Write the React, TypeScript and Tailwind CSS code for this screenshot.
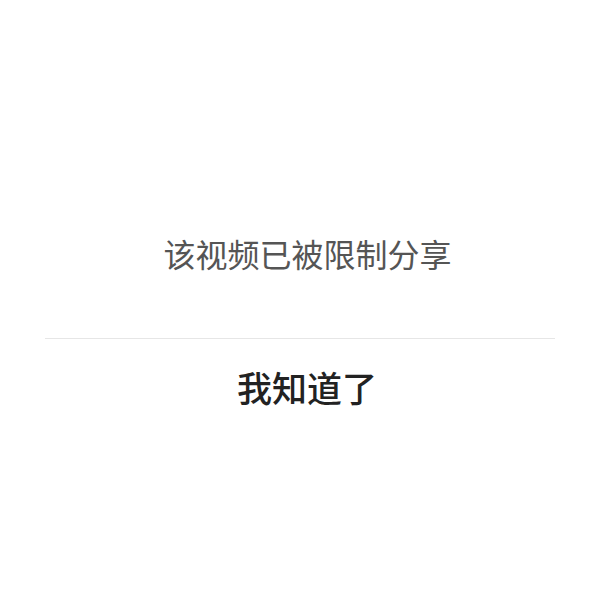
export default function App() {
  return (
    <div
      className="min-h-[600px] w-full bg-white px-[45px] pt-[233px]"
      style={{ fontFamily: '"Noto Sans CJK SC", "Noto Sans", sans-serif' }}
    >
      <p className="pb-[65px] pl-[15px] text-center text-[32px] leading-[40px] text-[#555555]">
        该视频已被限制分享
      </p>
      <div className="h-px bg-[#e6e6e6]" />
      <button
        type="button"
        className="block w-full py-[28px] pl-[14px] text-center text-[35px] font-medium leading-[40px] text-[#222222]"
      >
        我知道了
      </button>
    </div>
  );
}
